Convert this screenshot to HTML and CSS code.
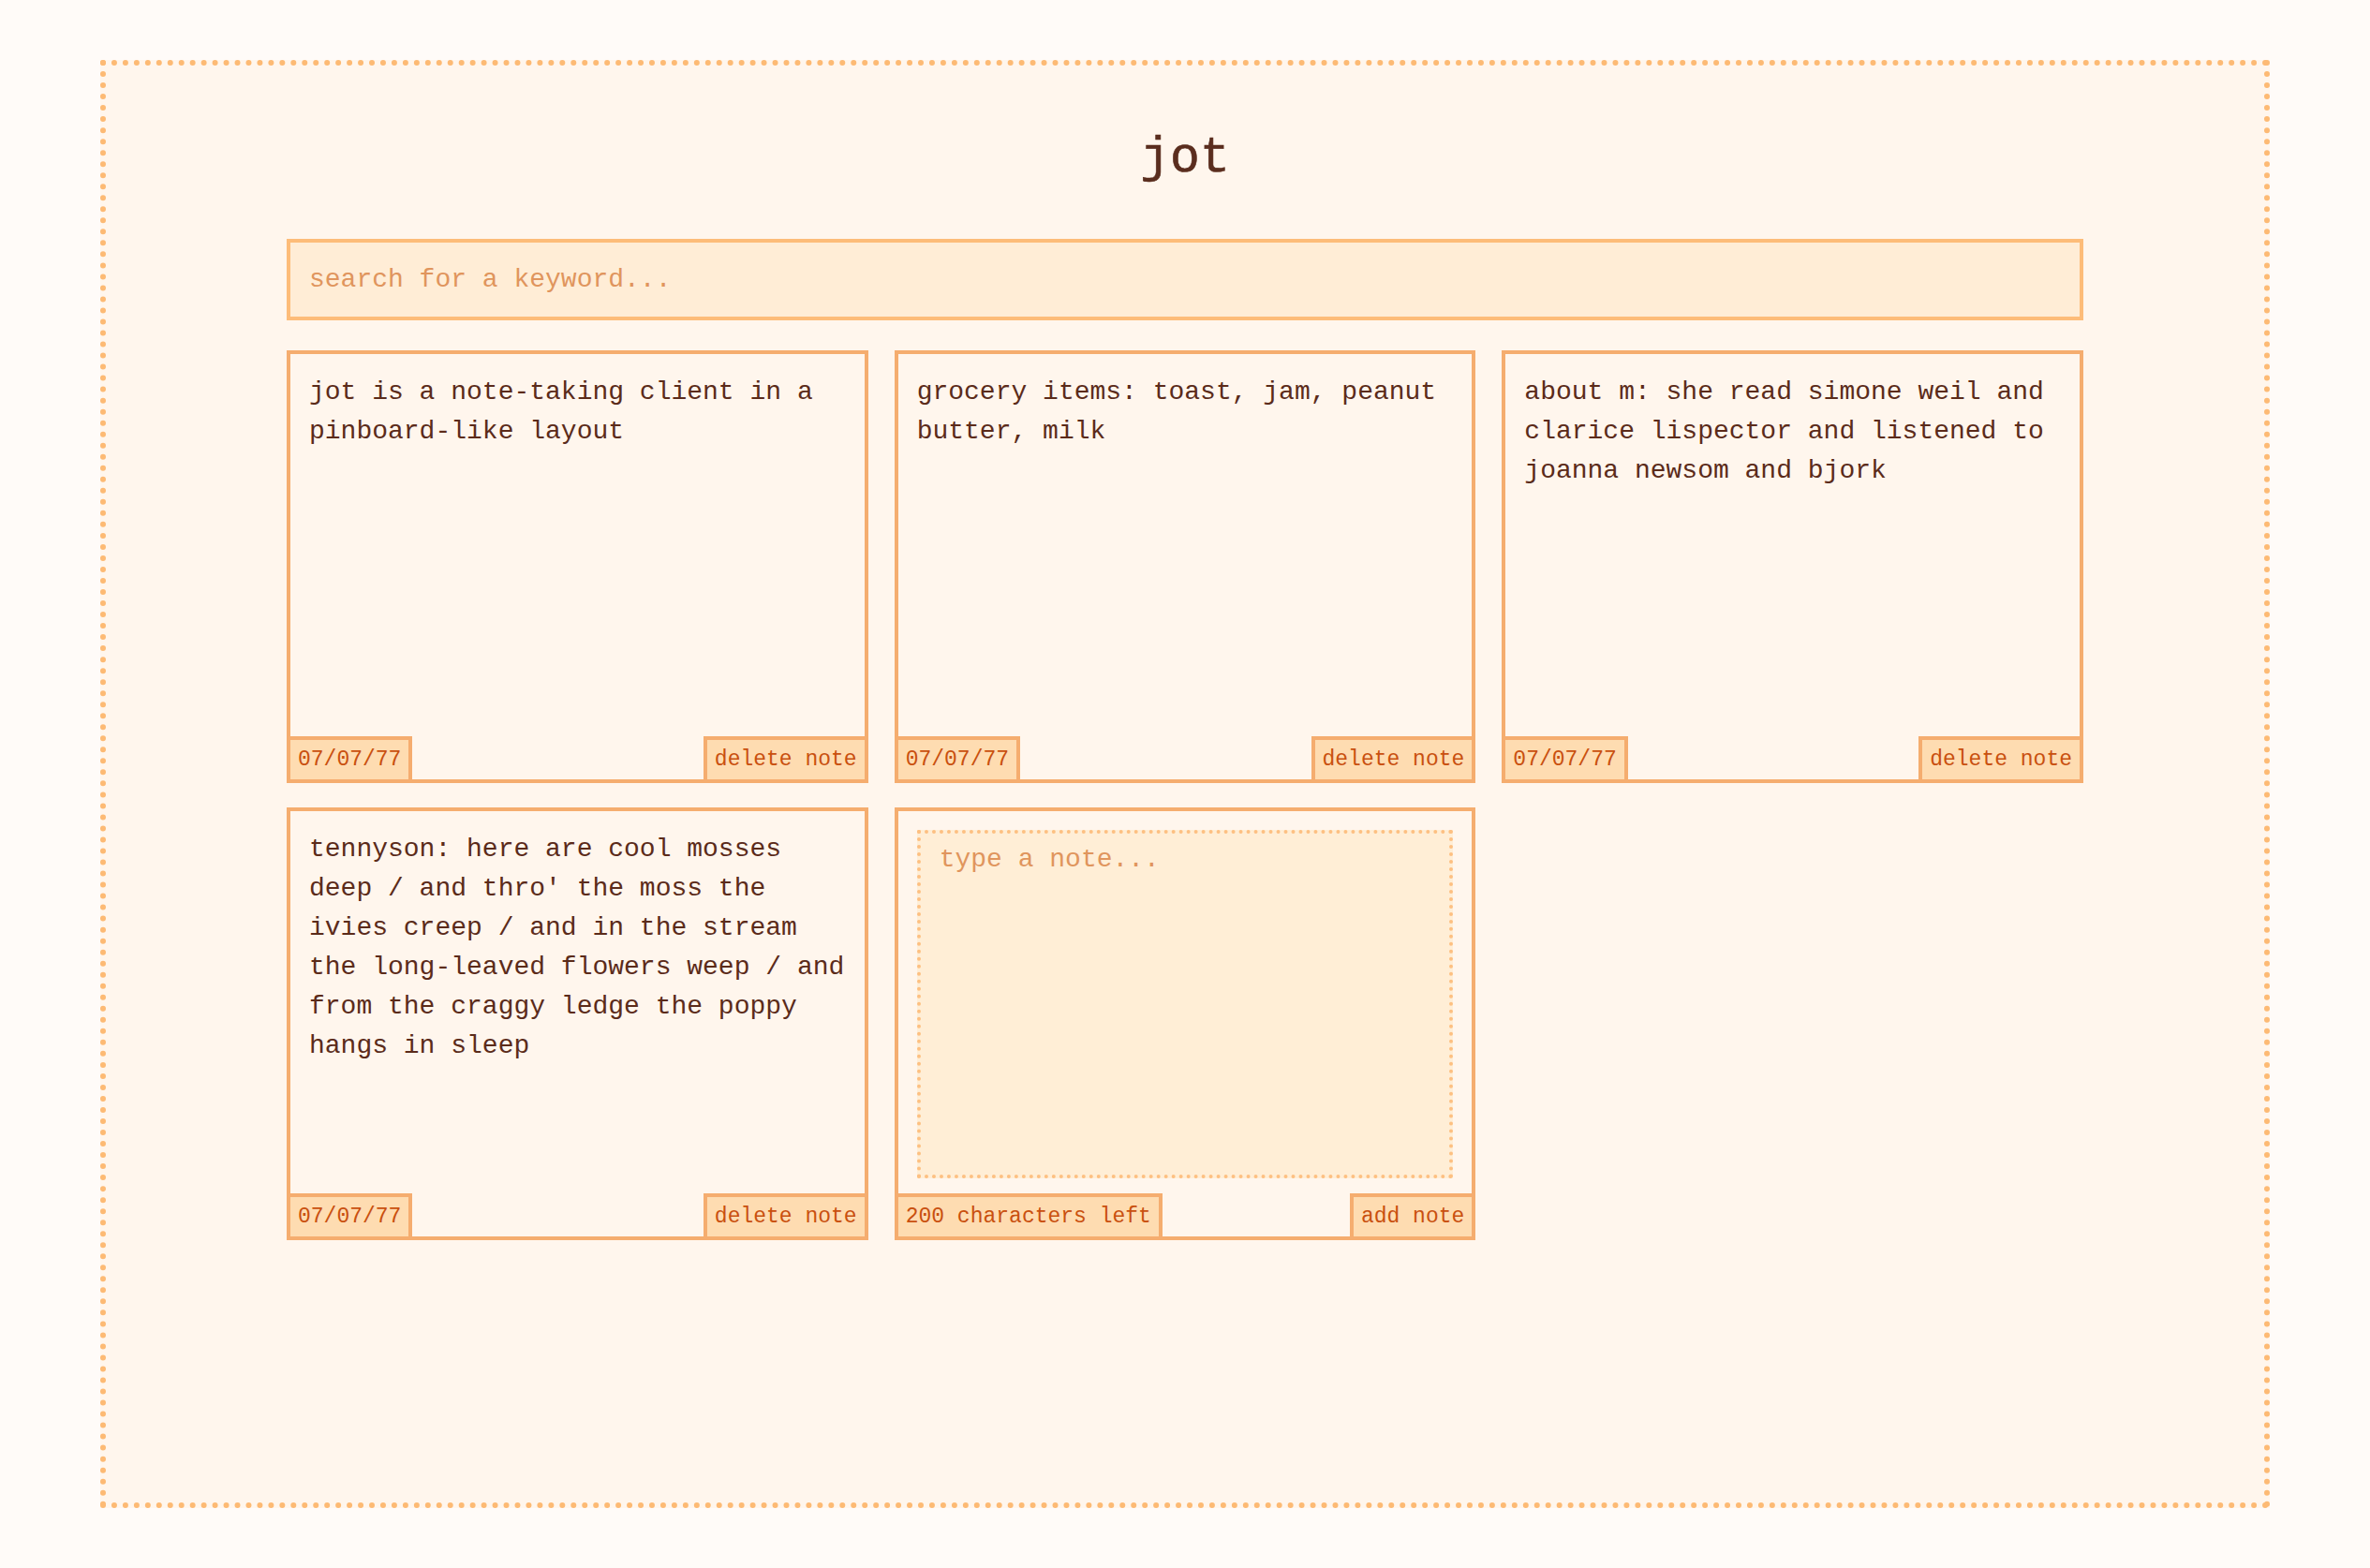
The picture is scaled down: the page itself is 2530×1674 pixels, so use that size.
FILE: index.html
```html
<!DOCTYPE html>
<html lang="en">
<head>
    <meta charset="UTF-8">
    <meta name="viewport" content="width=device-width, initial-scale=1.0">
    <title>jot</title>
    <link rel="stylesheet" href="styles.css">
</head>
<body>
    <div class="app">
        <h1 class="title">jot</h1>
        <div class="board">
            <input type="text" class="search" placeholder="search for a keyword...">
            <div class="notes">
                <div class="note">
                    <p class="note-text">jot is a note-taking client in a pinboard-like layout</p>
                    <div class="note-footer">
                        <span class="tag">07/07/77</span>
                        <button class="tag">delete note</button>
                    </div>
                </div>
                <div class="note">
                    <p class="note-text">grocery items: toast, jam, peanut butter, milk</p>
                    <div class="note-footer">
                        <span class="tag">07/07/77</span>
                        <button class="tag">delete note</button>
                    </div>
                </div>
                <div class="note">
                    <p class="note-text">about m: she read simone weil and clarice lispector and listened to joanna newsom and bjork</p>
                    <div class="note-footer">
                        <span class="tag">07/07/77</span>
                        <button class="tag">delete note</button>
                    </div>
                </div>
                <div class="note">
                    <p class="note-text">tennyson: here are cool mosses deep / and thro' the moss the ivies creep / and in the stream the long-leaved flowers weep / and from the craggy ledge the poppy hangs in sleep</p>
                    <div class="note-footer">
                        <span class="tag">07/07/77</span>
                        <button class="tag">delete note</button>
                    </div>
                </div>
                <div class="note new-note">
                    <textarea class="note-input" placeholder="type a note..." maxlength="200"></textarea>
                    <div class="note-footer">
                        <span class="tag">200 characters left</span>
                        <button class="tag">add note</button>
                    </div>
                </div>
            </div>
        </div>
    </div>
</body>
</html>
```

FILE: styles.css
```css
* {
    box-sizing: border-box;
}
body {
    margin: 0;
    background-color: #fffbf8;
    font-family: "Liberation Mono", "DejaVu Sans Mono", monospace;
    color: #5b2b1a;
}
.app {
    margin: 64px 107px;
    height: 1546px;
    padding-top: 69px;
    background-color: #fff6ed;
    border: 6px dotted #fdba74;
}
.title {
    margin: 0 0 56px;
    font-size: 53px;
    line-height: 60px;
    font-weight: normal;
    text-align: center;
    color: #5a2d1e;
    -webkit-text-stroke: 0.6px #5a2d1e;
}
.board {
    width: 1918px;
    margin: 0 auto;
}
.search {
    display: block;
    width: 100%;
    height: 87px;
    margin-bottom: 32px;
    padding: 0 20px;
    border: 4px solid #fdbc79;
    background-color: #ffedd6;
    font-family: inherit;
    font-size: 28px;
    color: #5b2b1a;
    outline: none;
}
.search::placeholder,
.note-input::placeholder {
    color: #e0955d;
}
.notes {
    display: grid;
    grid-template-columns: repeat(3, 1fr);
    gap: 26px 28px;
}
.note {
    display: flex;
    flex-direction: column;
    height: 462px;
    padding: 20px 20px 0;
    border: 4px solid #f5ad6f;
    background-color: #fff6ed;
}
.note-text {
    margin: 0;
    font-size: 28px;
    line-height: 42px;
}
.note-input {
    flex: 1;
    margin-bottom: 16px;
    padding: 12px 20px;
    border: 4px dotted #fdc082;
    background-color: #ffeed6;
    font-family: inherit;
    font-size: 28px;
    color: #5b2b1a;
    resize: none;
    outline: none;
}
.note-footer {
    display: flex;
    justify-content: space-between;
    align-items: flex-end;
    margin: auto -24px -4px;
}
.tag {
    padding: 8px;
    border: 4px solid #f5ad6f;
    background-color: #fedcb1;
    font-family: inherit;
    font-size: 23px;
    line-height: 26px;
    color: #c9500f;
}
button.tag {
    cursor: pointer;
}
```
